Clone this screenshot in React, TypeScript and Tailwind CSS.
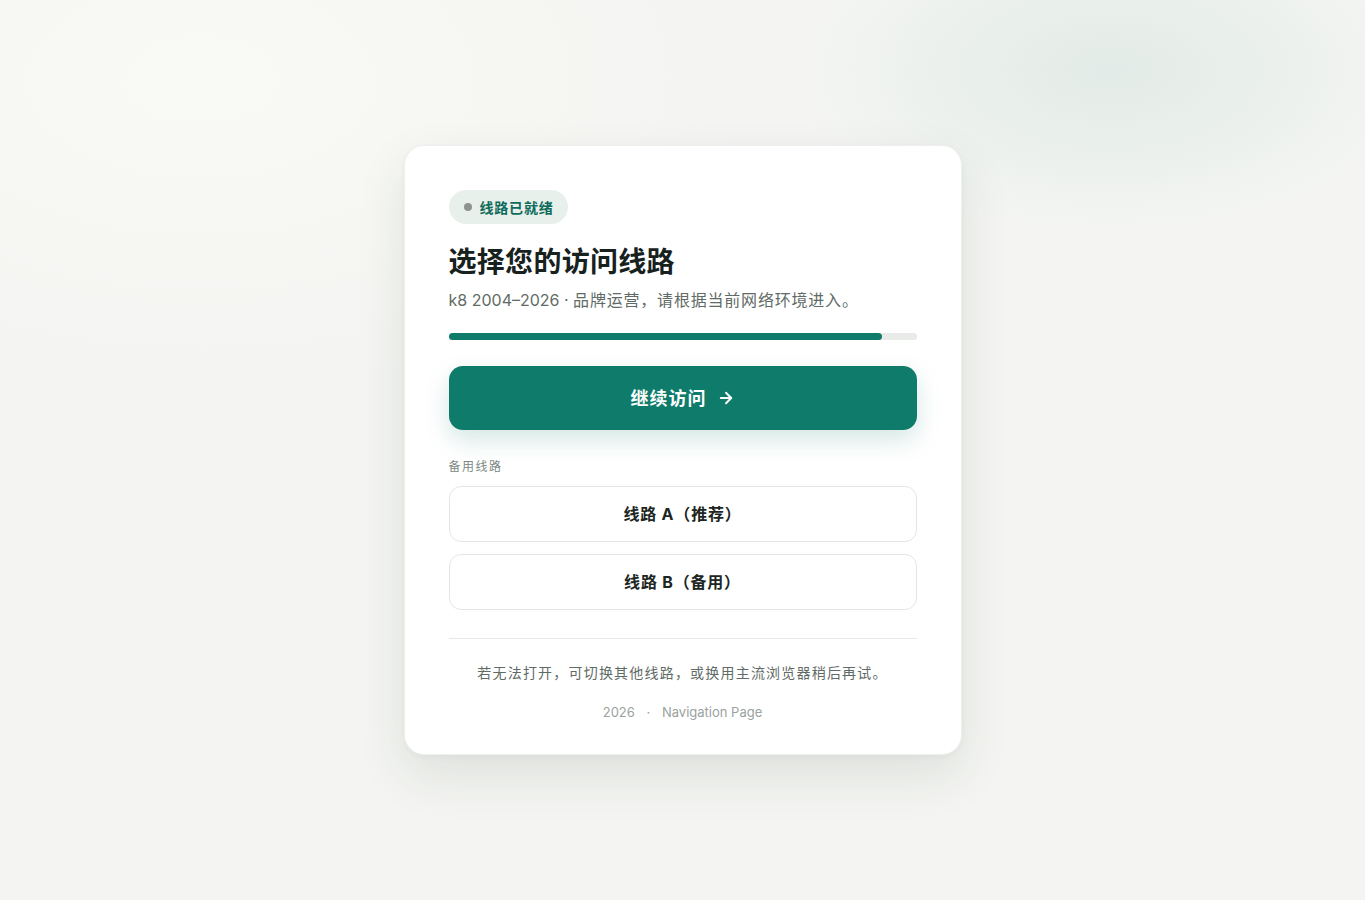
import { ArrowRight } from "lucide-react";

const routes = ["线路 A（推荐）", "线路 B（备用）"];

export default function App() {
  return (
    <div
      className="relative min-h-screen w-full overflow-hidden bg-[#f4f5f2] flex items-center justify-center text-[#17211d]"
      style={{ fontFamily: 'Inter, "Noto Sans CJK SC", sans-serif' }}
    >
      {/* soft background glows */}
      <div className="pointer-events-none absolute inset-0 bg-[radial-gradient(ellipse_420px_220px_at_1110px_70px,#e2ebe7,transparent_75%),radial-gradient(ellipse_700px_400px_at_200px_80px,#f9faf6,transparent_80%)]" />

      <div className="relative w-[558px] rounded-[20px] bg-white px-[44px] pt-[44px] pb-[32px] shadow-[0_20px_50px_rgba(30,50,40,0.10),0_2px_6px_rgba(30,50,40,0.04)] border border-[#eef0ed]">
        <div className="inline-flex h-[34px] items-center gap-[8px] rounded-full bg-[#e8f0ec] pl-[15px] pr-[14px]">
          <span className="h-[8px] w-[8px] rounded-full bg-[#8b9490]" />
          <span className="text-[14px] font-bold tracking-[0.8px] text-[#0f6b5a]">线路已就绪</span>
        </div>

        <h1 className="mt-[19px] text-[28px] font-bold leading-[38px] tracking-[0.3px] text-[#17211d]">
          选择您的访问线路
        </h1>
        <p className="mt-[7px] text-[16px] leading-[24px] text-[#5f6b66]">
          k8 2004–2026 · <span className="tracking-[0.8px]">品牌运营，请根据当前网络环境进入。</span>
        </p>

        <div className="mt-[21px] h-[7px] w-full rounded-full bg-[#e9ebe9]">
          <div className="h-full rounded-full bg-[#0f7b6a]" style={{ width: "92.6%" }} />
        </div>

        <button className="mt-[26px] flex h-[64px] w-full items-center justify-center gap-[10px] rounded-[14px] bg-[#0f7b6a] text-[18px] font-bold tracking-[1px] text-white shadow-[0_10px_24px_rgba(15,123,106,0.18)]">
          继续访问
          <ArrowRight className="h-[18px] w-[18px]" strokeWidth={2.5} />
        </button>

        <div className="mt-[28px] text-[12px] leading-[18px] tracking-[1.5px] text-[#7d8883]">备用线路</div>

        <div className="mt-[10px] flex flex-col gap-[12px]">
          {routes.map((r) => (
            <button
              key={r}
              className="flex h-[56px] w-full items-center justify-center rounded-[12px] border border-[#e3e6e3] bg-white text-[16px] font-bold tracking-[0.8px] text-[#1c2622]"
            >
              {r}
            </button>
          ))}
        </div>

        <div className="mt-[28px] h-px w-full bg-[#e7e9e7]" />

        <p className="mt-[23px] text-center text-[14px] leading-[22px] tracking-[1.2px] text-[#5f6b66]">
          若无法打开，可切换其他线路，或换用主流浏览器稍后再试。
        </p>
        <p className="mt-[18px] text-center text-[13px] leading-[20px] text-[#9aa29e]">
          2026 <span className="mx-[8px]">·</span> Navigation Page
        </p>
      </div>
    </div>
  );
}
